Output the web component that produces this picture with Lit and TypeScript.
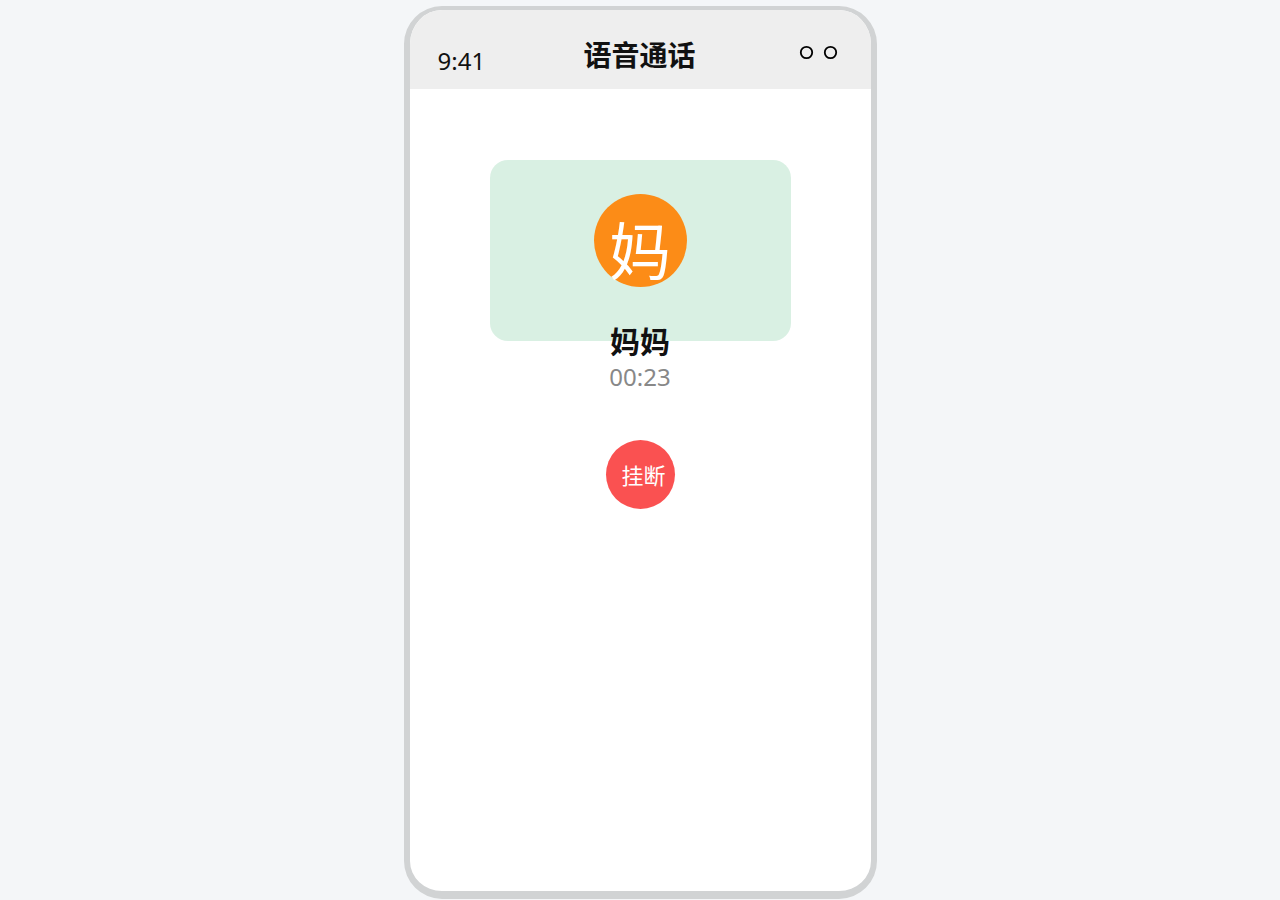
import { LitElement, html, css } from "lit";
import { customElement, property } from "lit/decorators.js";

@customElement("call-header")
class CallHeader extends LitElement {
  @property() time = "";
  @property() heading = "";

  static styles = css`
    :host {
      display: block;
      background: #eeeeee;
    }
    .bar {
      display: grid;
      grid-template-columns: 1fr auto 1fr;
      align-items: start;
      padding: 25px 33px 8px 28px;
    }
    .time {
      padding-top: 6px;
      font-size: 24px;
      line-height: 40px;
    }
    .title {
      margin: 0;
      padding-left: 4px;
      font-size: 28px;
      line-height: 40px;
      font-weight: 700;
    }
    .marks {
      justify-self: end;
      padding-top: 10px;
    }
    svg {
      display: block;
    }
  `;

  render() {
    return html`
      <header class="bar">
        <span class="time">${this.time}</span>
        <h1 class="title">${this.heading}</h1>
        <span class="marks">
          <svg width="39" height="15" viewBox="0 0 39 15" fill="none" stroke="#000" stroke-width="1.8" aria-hidden="true">
            <circle cx="7.5" cy="7.5" r="5.7" />
            <circle cx="31.5" cy="7.5" r="5.7" />
          </svg>
        </span>
      </header>
    `;
  }
}

@customElement("call-contact")
class CallContact extends LitElement {
  @property() name = "";
  @property() duration = "";

  static styles = css`
    :host {
      display: flex;
      flex-direction: column;
      align-items: center;
      width: 100%;
    }
    .card {
      box-sizing: border-box;
      width: 100%;
      max-width: 301px;
      height: 181px;
      padding-top: 34px;
      border-radius: 18px;
      background: #d9f0e3;
    }
    .avatar {
      box-sizing: border-box;
      width: 93px;
      height: 93px;
      margin: 0 auto;
      padding-top: 21px;
      border-radius: 50%;
      background: #fc8c17;
      color: #fff;
      font-size: 62px;
      line-height: 72px;
      text-align: center;
    }
    .name {
      margin: -19px 0 0;
      font-size: 30px;
      line-height: 40px;
      font-weight: 700;
    }
    .duration {
      margin: 0;
      font-size: 24px;
      line-height: 30px;
      color: #888;
    }
  `;

  render() {
    return html`
      <div class="card">
        <div class="avatar" aria-hidden="true">${this.name.slice(0, 1)}</div>
      </div>
      <h2 class="name">${this.name}</h2>
      <p class="duration">${this.duration}</p>
    `;
  }
}

@customElement("app-root")
class AppRoot extends LitElement {
  static styles = css`
    :host {
      box-sizing: border-box;
      display: flex;
      justify-content: center;
      min-height: 100vh;
      padding: 6px 0 1px;
      background: #f4f6f8;
      color: #111;
      font-family: "Noto Sans", "Noto Sans CJK SC", sans-serif;
    }
    .phone {
      box-sizing: border-box;
      width: 100%;
      max-width: 473px;
      overflow: hidden;
      border: solid #d1d3d4;
      border-width: 4px 6px 8px;
      border-radius: 38px;
      background: #fff;
    }
    .call {
      display: flex;
      flex-direction: column;
      align-items: center;
      padding: 71px 24px 40px;
    }
    .hangup {
      width: 69px;
      height: 69px;
      margin-top: 48px;
      padding: 0 0 0 7px;
      border: 0;
      border-radius: 50%;
      background: #fa5151;
      color: #fff;
      font-family: inherit;
      font-size: 22px;
      line-height: 32px;
      white-space: nowrap;
      cursor: pointer;
    }
  `;

  render() {
    return html`
      <div class="phone">
        <call-header time="9:41" heading="语音通话"></call-header>
        <main class="call">
          <call-contact name="妈妈" duration="00:23"></call-contact>
          <button class="hangup" type="button">挂断</button>
        </main>
      </div>
    `;
  }
}
